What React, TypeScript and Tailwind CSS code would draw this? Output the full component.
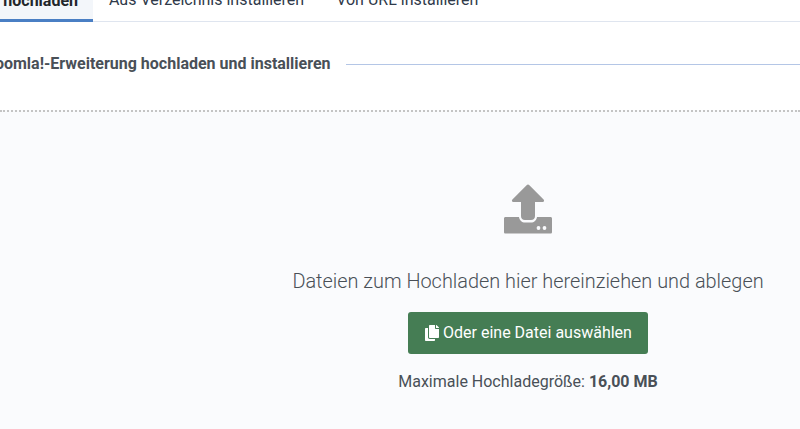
import { FaCopy } from "react-icons/fa";

function UploadIcon() {
  return (
    <svg width="48" height="50" viewBox="0 0 48 50" className="block">
      <path
        d="M24 0.5 C24.5 0.5 25 0.8 25.4 1.2 L39.6 15.4 C40.6 16.5 40 18 38.6 18 L31 18 L31 32 C31 34.5 29.5 36 27 36 L21 36 C18.5 36 17 34.5 17 32 L17 18 L9.4 18 C8 18 7.4 16.5 8.4 15.4 L22.6 1.2 C23 0.8 23.5 0.5 24 0.5 Z"
        fill="#999999"
      />
      <path
        d="M1.5 33 L15 33 C15.5 36.5 18 38.5 21 38.5 L27 38.5 C30 38.5 32.5 36.5 33 33 L46.5 33 C47.4 33 48 33.6 48 34.5 L48 48 C48 49 47.4 49.5 46.5 49.5 L1.5 49.5 C0.6 49.5 0 49 0 48 L0 34.5 C0 33.6 0.6 33 1.5 33 Z"
        fill="#999999"
      />
      <circle cx="34.5" cy="44" r="1.9" fill="#fafbfd" />
      <circle cx="40.5" cy="44" r="1.9" fill="#fafbfd" />
    </svg>
  );
}

export default function App() {
  return (
    <div className="h-[429px] w-[800px] overflow-hidden bg-white font-['Roboto',sans-serif]">
      <div className="flex h-[22px] items-end border-b border-[#dfe5ef] text-[16px] leading-[20px]">
        <div className="-mb-px flex h-[31px] w-[93px] shrink-0 items-start justify-end border-b-[3px] border-[#4a7fc4] bg-[#f3f6fa] pr-[15px] font-bold text-[#22262b]">
          hochladen
        </div>
        <div className="ml-[16px] h-[31px] text-[#2f3a4a]">Aus Verzeichnis installieren</div>
        <div className="ml-[32px] h-[31px] text-[#2f3a4a]">Von URL installieren</div>
      </div>

      <div className="-ml-[14px] mt-[32px] flex h-[20px] items-center gap-[15px]">
        <h2 className="whitespace-nowrap text-[16px] font-bold leading-[20px] text-[#495057]">
          Joomla!-Erweiterung hochladen und installieren
        </h2>
        <div className="mt-[1px] h-px flex-1 bg-[#b4c6e6]" />
      </div>

      <div className="mt-[36px] flex h-[319px] flex-col items-center border-t-2 border-dotted border-[#c4c4c4] bg-[#fafbfd] pl-[256px]">
        <div className="mt-[72px]">
          <UploadIcon />
        </div>
        <p className="mt-[35px] text-[19.9px] font-light leading-[26px] text-[#495057]">
          Dateien zum Hochladen hier hereinziehen und ablegen
        </p>
        <button className="mt-[17px] flex h-[42px] w-[240px] items-center justify-center gap-[3px] rounded-[3px] bg-[#457d54] text-[16px] text-white">
          <FaCopy className="text-[16px]" />
          Oder eine Datei auswählen
        </button>
        <p className="mt-[17px] text-[16px] leading-[22px] text-[#495057]">
          Maximale Hochladegröße: <span className="font-bold">16,00 MB</span>
        </p>
      </div>
    </div>
  );
}
